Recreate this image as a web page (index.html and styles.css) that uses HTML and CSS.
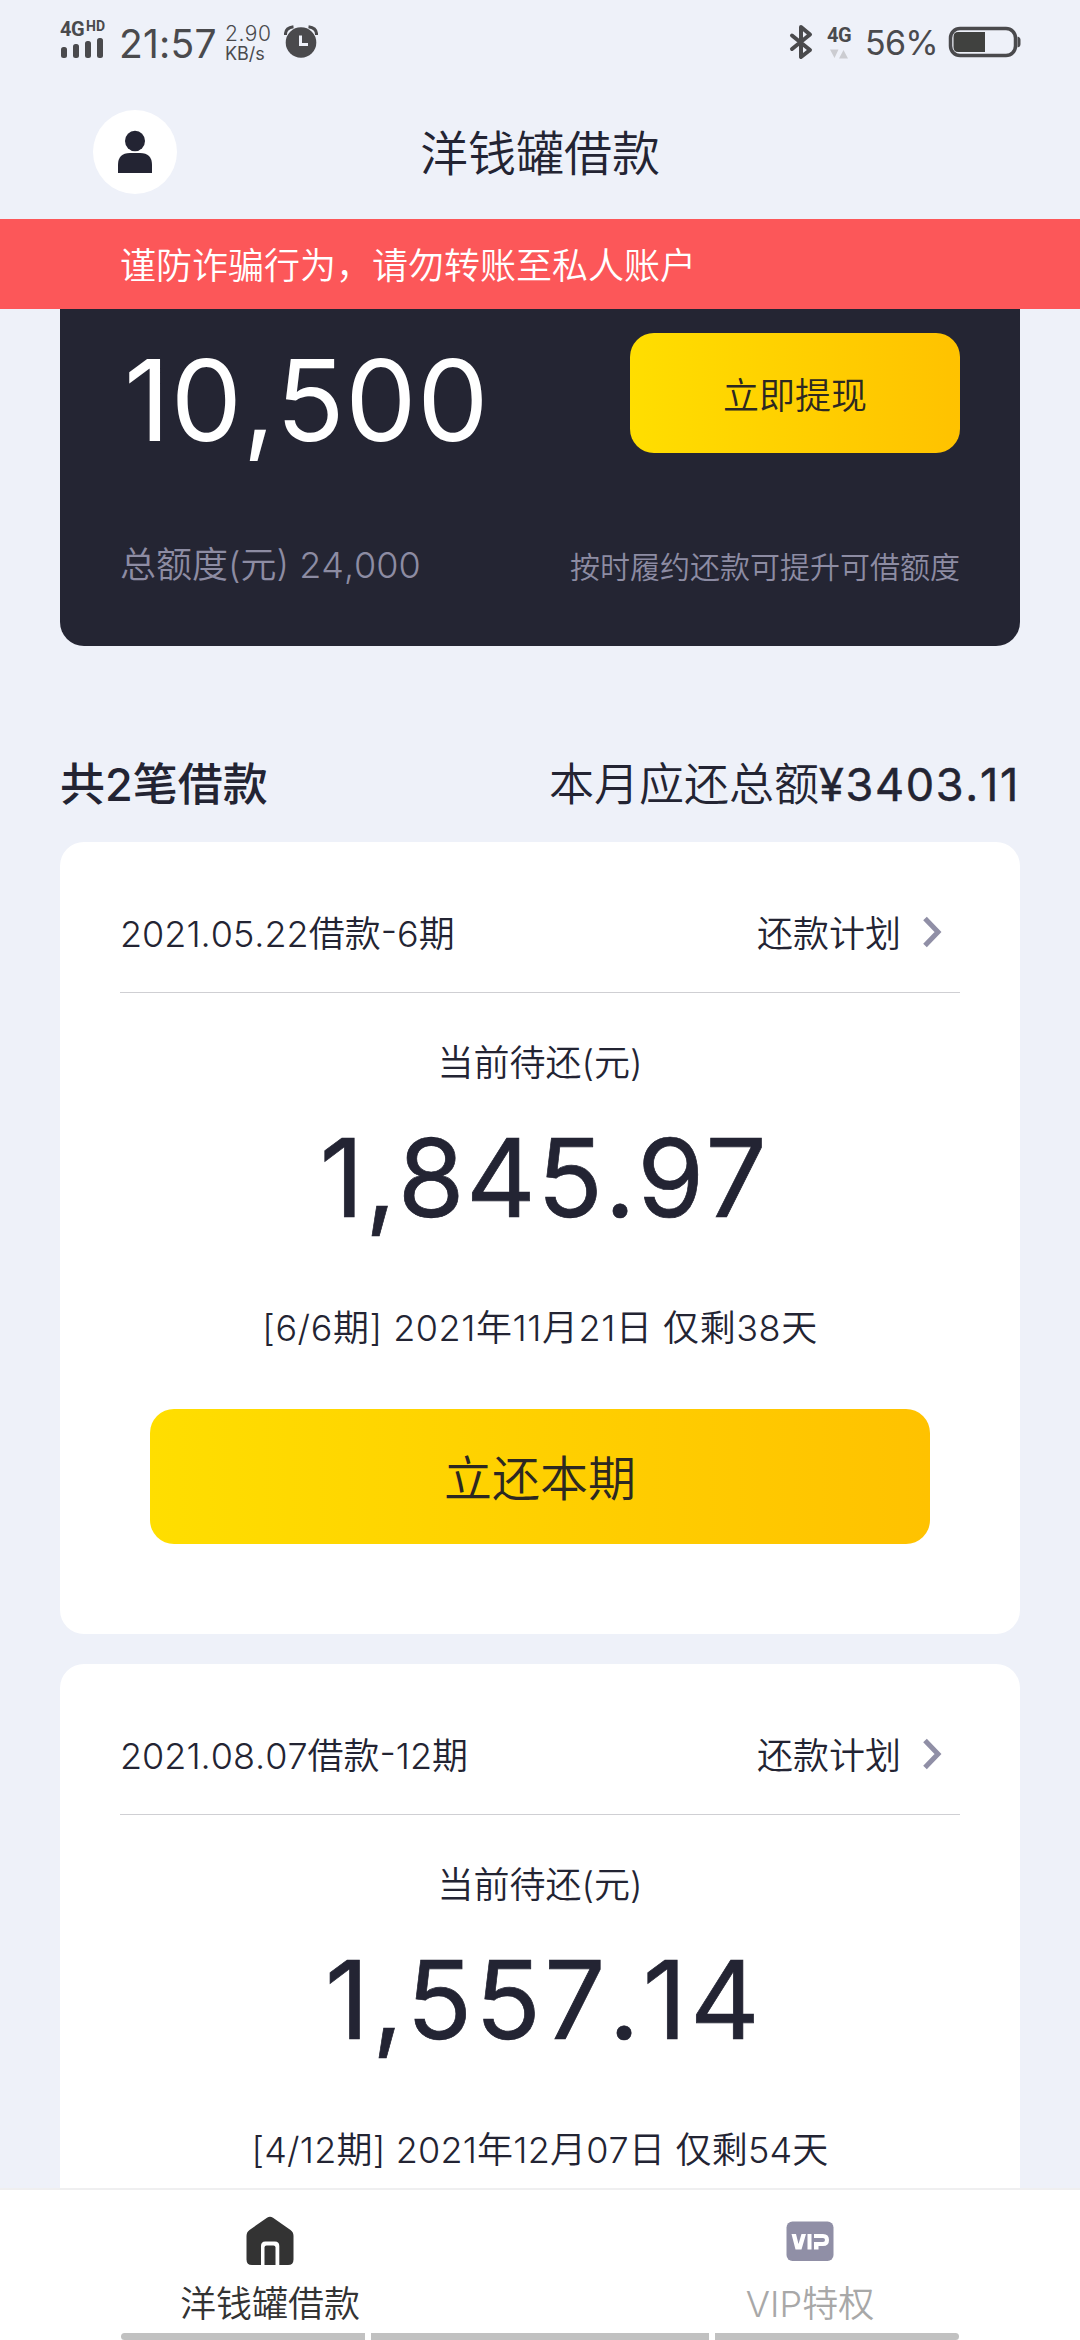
FILE: index.html
```html
<!DOCTYPE html>
<html lang="zh-CN">
<head>
<meta charset="utf-8">
<title>洋钱罐借款</title>
<link rel="stylesheet" href="styles.css">
</head>
<body>
<div class="app">
  <div class="status">
    <div class="signal">
      <div class="network"><b class="gen">4G</b><b class="hd">HD</b></div>
      <svg class="bars" width="44" height="22" viewBox="0 0 44 22"><g fill="#4a4a4d"><rect x="1" y="10" width="6" height="11" rx="2.5"/><rect x="13" y="7" width="6" height="14" rx="2.5"/><rect x="25" y="4" width="6" height="17" rx="2.5"/><rect x="37" y="1" width="6" height="20" rx="2.5"/></g></svg>
    </div>
    <span class="clock">21:57</span>
    <div class="speed"><span class="rate">2.90</span><span class="unit">KB/s</span></div>
    <svg class="alarm" width="34" height="34" viewBox="0 0 34 34"><circle cx="17" cy="17.5" r="15.3" fill="#4a4a4d"/><path d="M1.5 10Q1 3 9.500 1.800M32.500 10Q33 3 24.500 1.800" fill="none" stroke="#4a4a4d" stroke-width="3"/><path d="M16.500 10.500V19.500H24" fill="none" stroke="#eef1f9" stroke-width="3"/></svg>
    <svg class="bluetooth" width="24" height="36" viewBox="0 0 24 36"><path d="M3 11.500L21 26 12 33V3L21 10.500 3 25" fill="none" stroke="#4a4a4d" stroke-width="4" stroke-linecap="round" stroke-linejoin="round"/></svg>
    <div class="data"><b class="gen">4G</b><svg width="18" height="10" viewBox="0 0 18 10"><path d="M0 0.500H8.500L4.500 9ZM9 9.500L13.500 1 18 9.500Z" fill="#cbccd1"/></svg></div>
    <span class="percent">56%</span>
    <svg class="battery" width="74" height="32" viewBox="0 0 74 32"><rect x="2.500" y="2.500" width="65" height="27" rx="9.500" fill="none" stroke="#4a4a4d" stroke-width="3.500"/><path d="M37 6V26H10Q5.500 26 5.500 21V11Q5.500 6 10 6Z" fill="#40413f"/><path d="M69.500 10.500Q72.500 11 72.500 14V18Q72.500 21 69.500 21.500Z" fill="#4a4a4d"/></svg>
  </div>

  <header class="header">
    <div class="avatar"><svg width="36" height="44" viewBox="0 0 36 44"><ellipse cx="18" cy="11" rx="10" ry="10.300" fill="#232433"/><path d="M1 43V35Q1 23 13 23H23Q35 23 35 35V43Z" fill="#232433"/></svg></div>
    <h1 class="title">洋钱罐借款</h1>
  </header>
  <div class="notice">谨防诈骗行为，请勿转账至私人账户</div>

  <main class="content">
    <section class="quota">
      <div class="quota-row">
        <span class="available">10,500</span>
        <button class="withdraw">立即提现</button>
      </div>
      <div class="quota-foot"><span class="total">总额度(元) 24,000</span><span class="tip">按时履约还款可提升可借额度</span></div>
    </section>

    <div class="summary"><span class="count">共2笔借款</span><span class="month">本月应还总额<b class="sum">¥3403.11</b></span></div>

    <section class="loan">
      <div class="loan-head"><span class="name">2021.05.22借款<span class="dash">-</span>6期</span><span class="plan">还款计划<svg class="arrow" width="20" height="32" viewBox="0 0 20 32"><path d="M3 2.500L16 16 3 29.500" fill="none" stroke="#908fa6" stroke-width="5"/></svg></span></div>
      <div class="label">当前待还(元)</div>
      <div class="amount">1,845.97</div>
      <div class="due">[6/6期] 2021年11月21日 仅剩38天</div>
      <button class="repay">立还本期</button>
    </section>

    <section class="loan">
      <div class="loan-head"><span class="name">2021.08.07借款<span class="dash">-</span>12期</span><span class="plan">还款计划<svg class="arrow" width="20" height="32" viewBox="0 0 20 32"><path d="M3 2.500L16 16 3 29.500" fill="none" stroke="#908fa6" stroke-width="5"/></svg></span></div>
      <div class="label">当前待还(元)</div>
      <div class="amount amount-loose">1,557.14</div>
      <div class="due due-tight">[4/12期] 2021年12月07日 仅剩54天</div>
    </section>
  </main>

  <nav class="tabs">
    <div class="tab tab-active">
      <svg class="tab-icon" width="48" height="50" viewBox="0 0 48 50"><path d="M21 1.800Q24 -0.300 27 1.800L44.500 14Q47.500 16.200 47.500 20V43.500Q47.500 49 42 49H33.300V30Q33.300 25.500 29 25.500H19.200Q15 25.500 15 30V49H6Q0.500 49 0.500 43.500V20Q0.500 16.200 3.500 14Z" fill="#333"/><path d="M18.500 49V31.500Q18.500 29.500 20.500 29.500H27.500Q29.500 29.500 29.500 31.500V49Z" fill="#333"/></svg>
      <span>洋钱罐借款</span>
    </div>
    <div class="tab">
      <svg class="tab-icon" width="48" height="50" viewBox="0 0 48 50"><rect x="0.500" y="5.500" width="47" height="39.500" rx="6" fill="#908fa6"/><path d="M5.500 18H10L12.500 28 15.500 18H20L15.500 33.500H9.500ZM21.500 18H25.500V33.500H21.500ZM28 18H37Q43 18 43 24 43 30 37 30H32.500V33.500H28V26H37Q39 26 39 24 39 22 37 22H28Z" fill="#fff"/></svg>
      <span>VIP特权</span>
    </div>
    <div class="gestures"><i class="pill pill-left"></i><i class="pill pill-mid"></i><i class="pill pill-right"></i></div>
  </nav>
</div>
</body>
</html>
```
FILE: styles.css
```css
* { box-sizing: border-box; }
body {
  margin: 0;
  font-family: Inter, "Noto Sans CJK SC", sans-serif;
  font-weight: 350;
  font-kerning: none;
  color: #232433;
  background: #eef1f9;
}
button { border: 0; padding: 0; font: inherit; color: #2c2822; }
svg { display: block; flex: none; }
span, div, h1, button { white-space: nowrap; }

.app { width: 1080px; height: 2340px; display: flex; flex-direction: column; overflow: hidden; }

/* status bar */
.status { height: 84px; flex: none; display: flex; align-items: flex-start; padding: 0 58px 0 60px; color: #4a4a4d; }
.signal { width: 60px; padding-top: 20px; }
.network { display: flex; align-items: flex-start; height: 17px; }
.gen { font: 700 20px/18px Roboto, sans-serif; letter-spacing: -0.5px; }
.hd { font: 700 14px/13px Roboto, sans-serif; margin-left: 2px; }
.clock { font-size: 39px; line-height: 48px; padding-top: 20px; width: 105px; margin-left: -1px; margin-right: 1px; font-weight: 400; letter-spacing: 0.2px; }
.speed { display: flex; flex-direction: column; width: 59px; padding-top: 22px; }
.rate { font-size: 21px; line-height: 23px; letter-spacing: 0.5px; }
.unit { font-size: 18px; line-height: 18px; font-weight: 400; }
.alarm { margin-top: 25px; }
.bluetooth { margin: 24px 14px 0 auto; }
.data { width: 38px; padding-top: 26px; }
.data svg { margin: 3px 0 0 3px; }
.percent { width: 83px; font-size: 34px; line-height: 42px; padding-top: 22px; font-weight: 400; letter-spacing: -0.7px; }
.battery { margin-top: 26px; }

/* page header */
.header { height: 135px; flex: none; display: grid; grid-template-columns: 1fr auto 1fr; align-items: center; }
.avatar { width: 84px; height: 84px; margin-left: 93px; border-radius: 50%; background: #fff; display: flex; align-items: center; justify-content: center; }
.title { margin: 5px 0 0; font-size: 48px; line-height: 64px; font-weight: 350; }
.notice { height: 90px; flex: none; padding-left: 120px; background: #fc5759; color: #fff; font-size: 36px; line-height: 94px; }

/* credit card */
.content { flex: 1; min-height: 0; overflow: hidden; padding: 0 60px; display: flex; flex-direction: column; }
.quota { height: 337px; flex: none; padding: 24px 60px 0; border-radius: 0 0 24px 24px; background: #242533; }
.quota-row { display: flex; justify-content: space-between; height: 120px; }
.available { padding-left: 4px; font-size: 113px; line-height: 134px; letter-spacing: 0.7px; font-weight: 400; color: #fff; }
.withdraw, .repay { background: linear-gradient(90deg, #ffde00, #ffc200); border-radius: 24px; }
.withdraw { width: 330px; height: 120px; font-size: 36px; }
.quota-foot { display: flex; justify-content: space-between; align-items: flex-end; margin-top: 88px; color: #8d8ca3; }
.total { font-size: 36px; line-height: 48px; }
.tip { font-size: 30px; line-height: 44px; }

.summary { height: 196px; flex: none; display: flex; justify-content: space-between; padding-top: 109px; font-size: 45px; line-height: 60px; }
.count { font-weight: 500; }
.sum { font-weight: 400; letter-spacing: 1.7px; -webkit-text-stroke: 0.5px; }

/* loan cards */
.loan { height: 792px; flex: none; margin-bottom: 30px; padding: 0 60px; border-radius: 24px; background: #fff; display: flex; flex-direction: column; align-items: center; }
.loan-head { width: 100%; height: 151px; flex: none; display: flex; justify-content: space-between; align-items: flex-start; padding-top: 68px; border-bottom: 1px solid #cfcfd3; font-size: 36px; line-height: 48px; }
.dash { position: relative; top: -2px; }
.plan { display: flex; padding-right: 18px; gap: 21px; }
.arrow { margin-top: 6px; }
.label { margin-top: 46px; font-size: 36px; line-height: 48px; }
.amount { margin-top: 25px; padding-left: 8px; font-size: 108px; line-height: 132px; font-weight: 400; letter-spacing: 1.5px; -webkit-text-stroke: 0.7px; }
.amount-loose { letter-spacing: 3.2px; }
.due { margin-top: 60px; font-size: 36px; line-height: 48px; letter-spacing: 0.55px; }
.due-tight { letter-spacing: 0.2px; }
.repay { width: 780px; height: 135px; margin-top: 57px; padding-bottom: 3px; flex: none; font-size: 48px; }

/* bottom navigation */
.tabs { position: relative; height: 152px; flex: none; display: flex; border-top: 2px solid #efeff0; background: #fff; }
.tab { flex: 1; display: flex; flex-direction: column; align-items: center; padding-top: 26px; font-size: 36px; line-height: 48px; color: #a8a8a8; }
.tab-active { color: #333; }
.tab-icon { margin-bottom: 14px; }
.gestures { position: absolute; left: 121px; right: 121px; bottom: 0; height: 7px; display: flex; gap: 6px; }
.pill { background: #c1c1c1; }
.pill-left { width: 244px; border-radius: 4px 0 0 4px; }
.pill-mid { flex: 1; }
.pill-right { width: 244px; border-radius: 0 4px 4px 0; }
```
